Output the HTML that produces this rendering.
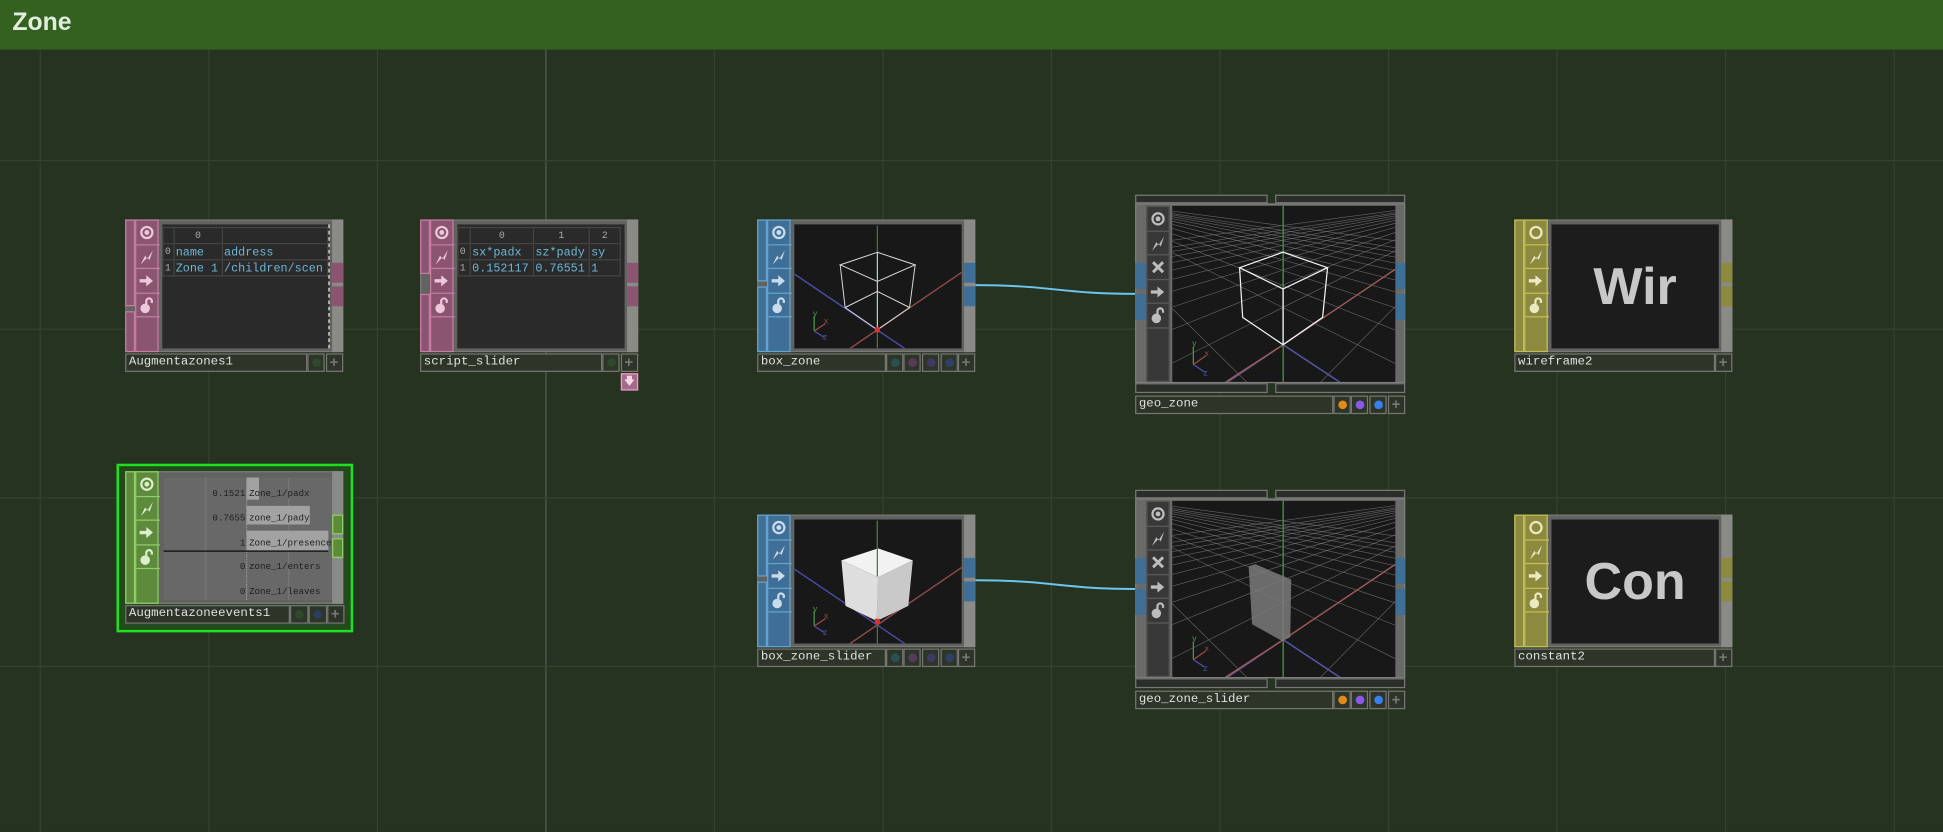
<!DOCTYPE html>
<html><head><meta charset="utf-8"><style>
html,body{margin:0;padding:0;background:#263320;overflow:hidden;width:1943px;height:832px}
#s{position:absolute;left:0;top:0;width:1568px;height:671px;transform-origin:0 0;transform:scale(1.2392,1.2399);background:#263320;font-family:"Liberation Mono",monospace;overflow:hidden}
.gv{position:absolute;top:40px;bottom:0;width:1px;background:#34422f}
.gh{position:absolute;left:0;right:0;height:1px;background:#34422f}
#hdr{position:absolute;left:0;top:0;width:1568px;height:40px;background:#356120}
#hdr span{position:absolute;left:10px;top:7px;font:bold 20px "Liberation Sans",sans-serif;color:#dfeedd}
.n{position:absolute}
.body{position:absolute;left:0;top:0;width:176px;height:107px;background:#626260;border:1px solid #7a7a78;box-sizing:border-box}
.ls{position:absolute;left:0;top:0;width:8px;height:107px}
.ic{position:absolute;left:8px;top:0;width:19px;height:107px;box-sizing:border-box}
.ic svg{display:block}
.cell{width:19px;height:19.5px;box-sizing:border-box}
.vw{position:absolute;left:30px;top:4px;width:135px;height:100px;background:#181818;overflow:hidden}
.rs{position:absolute;left:167px;top:0;width:9px;height:107px;background:#8a8a86}
.out{position:absolute;left:167px;width:9px;height:16px}
.nb{position:absolute;top:108px;height:15px;box-sizing:border-box;border:1px solid #767674;background:#2d3428;color:#e0e0e0;font-size:10px;line-height:13px;padding-left:2px;white-space:nowrap;overflow:hidden}
.bx{position:absolute;top:108px;height:15px;width:14px;box-sizing:border-box;border:1px solid #767674;background:#2d3428}
.dot{position:absolute;left:3px;top:3px;width:7px;height:7px;border-radius:50%}
.pl{position:absolute;left:2px;top:0;color:#777;font:bold 12px "Liberation Sans",sans-serif;line-height:13px}
table{border-collapse:collapse;font-size:9.5px;color:#6db7d8;position:absolute;left:0;top:2px}
td{border:1px solid #444;height:12px;padding:0 1px;white-space:nowrap;overflow:hidden}
td.i{color:#aaa;font-size:8px;width:7px}
tr.h td{color:#aaa;font-size:8px;text-align:center}
</style></head><body><div id="s">
<svg width="0" height="0" style="position:absolute">
<defs>
<symbol id="tg" viewBox="0 0 19 19"><circle cx="9.5" cy="9.5" r="5" fill="none" stroke="currentColor" stroke-width="2"/><circle cx="9.5" cy="9.5" r="2.2" fill="currentColor"/></symbol>
<symbol id="rg" viewBox="0 0 19 19"><circle cx="9.5" cy="9.5" r="5" fill="none" stroke="currentColor" stroke-width="2"/></symbol>
<symbol id="lt" viewBox="0 0 19 19"><path d="M4 16 L8 8 L10 11 L15 3 L12 12 L10 9.5 Z" fill="currentColor"/></symbol>
<symbol id="ar" viewBox="0 0 19 19"><path d="M3 8 H9 V4.5 L15 9.5 L9 14.5 V11 H3 Z" fill="currentColor"/></symbol>
<symbol id="lk" viewBox="0 0 19 19"><circle cx="8" cy="12" r="4.3" fill="currentColor"/><path d="M9 8 V5.5 A2.5 2.5 0 0 1 14 5.5 V7" fill="none" stroke="currentColor" stroke-width="2"/></symbol>
<symbol id="xx" viewBox="0 0 19 19"><path d="M5 5 L14 14 M14 5 L5 14" stroke="currentColor" stroke-width="2.6"/></symbol>
<g id="grid" fill="none">
<g stroke="#7a7a7a" stroke-width="0.5" stroke-opacity="0.8">
<line x1="268" y1="-8" x2="-83" y2="712"/><line x1="268" y1="-8" x2="-300.8" y2="568"/><line x1="268" y1="-8" x2="-549.6" y2="403.6"/><line x1="268" y1="-8" x2="-627.6" y2="352"/><line x1="268" y1="-8" x2="-688" y2="312"/><line x1="268" y1="-8" x2="-736.4" y2="280"/><line x1="268" y1="-8" x2="-776" y2="254"/><line x1="268" y1="-8" x2="-809" y2="232"/><line x1="268" y1="-8" x2="-836.8" y2="213.6"/><line x1="268" y1="-8" x2="-860.8" y2="198"/><line x1="268" y1="-8" x2="-881.6" y2="184"/><line x1="268" y1="-8" x2="-900" y2="172"/><line x1="268" y1="-8" x2="-930" y2="152"/><line x1="268" y1="-8" x2="280" y2="952"/>
<line x1="-92" y1="-8" x2="277" y2="712"/><line x1="-92" y1="-8" x2="491.2" y2="568"/><line x1="-92" y1="-8" x2="736" y2="403.6"/><line x1="-92" y1="-8" x2="812.4" y2="352"/><line x1="-92" y1="-8" x2="872" y2="312"/><line x1="-92" y1="-8" x2="919.6" y2="280"/><line x1="-92" y1="-8" x2="958.4" y2="254"/><line x1="-92" y1="-8" x2="991" y2="232"/><line x1="-92" y1="-8" x2="1018.4" y2="213.6"/><line x1="-92" y1="-8" x2="1041.6" y2="198"/><line x1="-92" y1="-8" x2="1062.4" y2="184"/><line x1="-92" y1="-8" x2="1080" y2="172"/><line x1="-92" y1="-8" x2="1110" y2="152"/><line x1="-92" y1="-8" x2="-80" y2="952"/>
</g>
<line x1="89.5" y1="112" x2="-446" y2="472" stroke="#5656a8" stroke-width="1.2"/>
<line x1="89.5" y1="112" x2="268" y2="-8" stroke="#9a5a58" stroke-width="1.2"/>
<line x1="89.5" y1="112" x2="634" y2="472" stroke="#5656a8" stroke-width="1.2"/>
<line x1="89.5" y1="112" x2="-200" y2="300" stroke="#9a5a58" stroke-width="1.2"/>
<line x1="89.5" y1="0" x2="89.5" y2="142" stroke="#3f8a3f" stroke-width="1.2"/>
</g>
<g id="ax2">
<line x1="0" y1="40" x2="89" y2="100" stroke="#4a4aa0" stroke-width="1.2"/>
<line x1="45" y1="100" x2="136" y2="38" stroke="#8a4a48" stroke-width="1.2"/>
<line x1="67" y1="1" x2="67" y2="100" stroke="#3f7a3f" stroke-width="1"/>
<g font-family="Liberation Sans,sans-serif" font-size="7"><line x1="16" y1="86" x2="16" y2="74" stroke="#4a9a4a"/><line x1="16" y1="86" x2="25" y2="80" stroke="#a04848"/><line x1="16" y1="86" x2="24" y2="91" stroke="#5050b0"/><text x="15" y="74" fill="#4a9a4a">y</text><text x="24" y="80" fill="#a04848">x</text><text x="23" y="93" fill="#5050b0">z</text></g>
</g>
</defs></svg>

<div class="gv" style="left:32px"></div><div class="gv" style="left:168px"></div><div class="gv" style="left:304px"></div><div class="gv" style="left:440px;background:#4a5e56"></div><div class="gv" style="left:576px"></div><div class="gv" style="left:712px"></div><div class="gv" style="left:848px"></div><div class="gv" style="left:984px"></div><div class="gv" style="left:1120px"></div><div class="gv" style="left:1256px"></div><div class="gv" style="left:1392px"></div><div class="gv" style="left:1528px"></div>
<div class="gh" style="top:129px"></div><div class="gh" style="top:265px"></div><div class="gh" style="top:401px"></div><div class="gh" style="top:537px"></div>
<div id="hdr"><span>Zone</span></div>

<svg style="position:absolute;left:0;top:0" width="1568" height="671"><path d="M787,230 C850,230 855,237 916,237" stroke="#6cc6ef" stroke-width="1.6" fill="none"/><path d="M787,468 C850,468 855,475 916,475" stroke="#6cc6ef" stroke-width="1.6" fill="none"/></svg>

<!-- Augmentazones1 -->
<div class="n" style="left:101px;top:177px">
<div class="body"></div>
<div class="ls" style="background:#8b5470;border:1px solid #c47ea2;box-sizing:border-box;height:70px"></div>
<div class="ls" style="top:74px;height:33px;background:#8b5470;border:1px solid #c47ea2;box-sizing:border-box"></div>
<div class="ic" style="background:#8b5470;border:1px solid #c47ea2;color:#ecc8da">
<div class="cell" style="border-bottom:1px solid #c47ea2"><svg width="17" height="19"><use href="#tg"/></svg></div><div class="cell" style="border-bottom:1px solid #c47ea2"><svg width="17" height="19"><use href="#lt"/></svg></div><div class="cell" style="border-bottom:1px solid #c47ea2"><svg width="17" height="19"><use href="#ar"/></svg></div><div class="cell" style="border-bottom:1px solid #c47ea2"><svg width="17" height="19"><use href="#lk"/></svg></div></div>
<div class="vw" style="background:#2a2a2a;border-right:1px dashed #eee;box-sizing:border-box;width:135px">
<table><tr class="h"><td class="i"></td><td style="width:38px">0</td><td style="width:85px"></td></tr><tr><td class="i">0</td><td>name</td><td>address</td></tr><tr><td class="i">1</td><td>Zone 1</td><td>/children/scen</td></tr></table></div>
<div class="rs"></div><div class="out" style="top:35px;background:#8b5470"></div><div class="out" style="top:54px;background:#8b5470"></div>
<div class="nb" style="left:0;width:147px">Augmentazones1</div>
<div class="bx" style="left:147px"><div class="dot" style="background:#2f4a2a"></div></div>
<div class="bx" style="left:162px"><span class="pl">+</span></div>
</div>

<!-- script_slider -->
<div class="n" style="left:339px;top:177px">
<div class="body"></div>
<div class="ls" style="background:#8b5470;border:1px solid #c47ea2;box-sizing:border-box;height:44px"></div>
<div class="ls" style="top:60px;height:47px;background:#8b5470;border:1px solid #c47ea2;box-sizing:border-box"></div>
<div class="ic" style="background:#8b5470;border:1px solid #c47ea2;color:#ecc8da">
<div class="cell" style="border-bottom:1px solid #c47ea2"><svg width="17" height="19"><use href="#tg"/></svg></div><div class="cell" style="border-bottom:1px solid #c47ea2"><svg width="17" height="19"><use href="#lt"/></svg></div><div class="cell" style="border-bottom:1px solid #c47ea2"><svg width="17" height="19"><use href="#ar"/></svg></div><div class="cell" style="border-bottom:1px solid #c47ea2"><svg width="17" height="19"><use href="#lk"/></svg></div></div>
<div class="vw" style="background:#2a2a2a">
<table><tr class="h"><td class="i"></td><td style="width:48px">0</td><td style="width:42px">1</td><td style="width:22px">2</td></tr><tr><td class="i">0</td><td>sx*padx</td><td>sz*pady</td><td>sy</td></tr><tr><td class="i">1</td><td>0.152117</td><td>0.76551</td><td>1</td></tr></table></div>
<div class="rs"></div><div class="out" style="top:35px;background:#8b5470"></div><div class="out" style="top:54px;background:#8b5470"></div>
<div class="nb" style="left:0;width:147px">script_slider</div>
<div class="bx" style="left:147px"><div class="dot" style="background:#2f4a2a"></div></div>
<div class="bx" style="left:162px"><span class="pl">+</span></div>
<div style="position:absolute;left:162px;top:124px;width:14px;height:14px;box-sizing:border-box;background:#a46a8a;border:1px solid #f09ac8;color:#f0d8e4;font-size:9px;text-align:center;line-height:12px">&#129095;</div>
</div>

<!-- box_zone -->
<div class="n" style="left:611px;top:177px">
<div class="body"></div>
<div class="ls" style="background:#3f6e96;border:1px solid #66a4d0;box-sizing:border-box;height:50px"></div>
<div class="ls" style="top:54px;height:53px;background:#3f6e96;border:1px solid #66a4d0;box-sizing:border-box"></div>
<div class="ic" style="background:#3f6e96;border:1px solid #66a4d0;color:#c8dcee">
<div class="cell" style="border-bottom:1px solid #66a4d0"><svg width="17" height="19"><use href="#tg"/></svg></div><div class="cell" style="border-bottom:1px solid #66a4d0"><svg width="17" height="19"><use href="#lt"/></svg></div><div class="cell" style="border-bottom:1px solid #66a4d0"><svg width="17" height="19"><use href="#ar"/></svg></div><div class="cell" style="border-bottom:1px solid #66a4d0"><svg width="17" height="19"><use href="#lk"/></svg></div></div>
<div class="vw"><svg width="135" height="100"><use href="#ax2"/>
<g stroke="#d8d8d8" stroke-width="0.8" fill="none"><path d="M67 22.5 L37 32.6 L67 46 L97.5 32.6 Z M37 32.6 L41 67 L67 85 L93 67 L97.5 32.6 M67 46 V85 M41 67 L67 54 L93 67 M67 54 V22.5"/></g><rect x="65" y="83" width="4" height="4" fill="#e03030"/></svg></div>
<div class="rs"></div><div class="out" style="top:35px;background:#3f6e96"></div><div class="out" style="top:54px;background:#3f6e96"></div>
<div class="nb" style="left:0;width:104px">box_zone</div>
<div class="bx" style="left:104px"><div class="dot" style="background:#2b5050"></div></div>
<div class="bx" style="left:118px"><div class="dot" style="background:#5a3a5c"></div></div>
<div class="bx" style="left:133px"><div class="dot" style="background:#3e3a64"></div></div>
<div class="bx" style="left:148px"><div class="dot" style="background:#2e4066"></div></div>
<div class="bx" style="left:162px"><span class="pl">+</span></div>
</div>

<!-- box_zone_slider -->
<div class="n" style="left:611px;top:415px">
<div class="body"></div>
<div class="ls" style="background:#3f6e96;border:1px solid #66a4d0;box-sizing:border-box;height:50px"></div>
<div class="ls" style="top:54px;height:53px;background:#3f6e96;border:1px solid #66a4d0;box-sizing:border-box"></div>
<div class="ic" style="background:#3f6e96;border:1px solid #66a4d0;color:#c8dcee">
<div class="cell" style="border-bottom:1px solid #66a4d0"><svg width="17" height="19"><use href="#tg"/></svg></div><div class="cell" style="border-bottom:1px solid #66a4d0"><svg width="17" height="19"><use href="#lt"/></svg></div><div class="cell" style="border-bottom:1px solid #66a4d0"><svg width="17" height="19"><use href="#ar"/></svg></div><div class="cell" style="border-bottom:1px solid #66a4d0"><svg width="17" height="19"><use href="#lk"/></svg></div></div>
<div class="vw"><svg width="135" height="100"><use href="#ax2"/>
<polygon points="67.6,23.3 95.6,33 67.6,46.6 38,33" fill="#f2f2f2"/><polygon points="38,33 67.6,46.6 66.5,81.8 41.3,69.6" fill="#dedede"/><polygon points="67.6,46.6 95.6,33 92,69.6 66.5,81.8" fill="#c9c9c9"/><line x1="67" y1="1" x2="67" y2="46" stroke="#3f7a3f"/><rect x="65" y="80" width="4" height="4" fill="#e03030"/></svg></div>
<div class="rs"></div><div class="out" style="top:35px;background:#3f6e96"></div><div class="out" style="top:54px;background:#3f6e96"></div>
<div class="nb" style="left:0;width:104px">box_zone_slider</div>
<div class="bx" style="left:104px"><div class="dot" style="background:#2b5050"></div></div>
<div class="bx" style="left:118px"><div class="dot" style="background:#5a3a5c"></div></div>
<div class="bx" style="left:133px"><div class="dot" style="background:#3e3a64"></div></div>
<div class="bx" style="left:148px"><div class="dot" style="background:#2e4066"></div></div>
<div class="bx" style="left:162px"><span class="pl">+</span></div>
</div>

<!-- geo_zone -->
<div class="n" style="left:916px;top:157px;width:218px">
<div style="position:absolute;left:0;top:0;width:107px;height:7px;background:#2a2e28;border:1px solid #777;box-sizing:border-box"></div>
<div style="position:absolute;left:113px;top:0;width:105px;height:7px;background:#2a2e28;border:1px solid #777;box-sizing:border-box"></div>
<div style="position:absolute;left:0;top:7px;width:218px;height:145px;background:#6a6a68;border:1px solid #7e7e7c;box-sizing:border-box"></div>
<div style="position:absolute;left:0;top:55px;width:9px;height:21px;background:#3f6e96"></div><div style="position:absolute;left:0;top:80px;width:9px;height:21px;background:#3f6e96"></div>
<div style="position:absolute;left:210px;top:55px;width:8px;height:21px;background:#3f6e96"></div><div style="position:absolute;left:210px;top:80px;width:8px;height:21px;background:#3f6e96"></div>
<div class="ic" style="left:9px;top:9px;height:142px;background:#383838;border:1px solid #555;color:#bdbdbd">
<div class="cell" style="border-bottom:1px solid #5a5a5a"><svg width="17" height="19"><use href="#tg"/></svg></div><div class="cell" style="border-bottom:1px solid #5a5a5a"><svg width="17" height="19"><use href="#lt"/></svg></div><div class="cell" style="border-bottom:1px solid #5a5a5a"><svg width="17" height="19"><use href="#xx"/></svg></div><div class="cell" style="border-bottom:1px solid #5a5a5a"><svg width="17" height="19"><use href="#ar"/></svg></div><div class="cell" style="border-bottom:1px solid #5a5a5a"><svg width="17" height="19"><use href="#lk"/></svg></div></div>
<div class="vw" style="left:30px;top:9px;width:180px;height:142px"><svg width="180" height="142"><use href="#grid"/>
<g stroke="#f2f2f2" stroke-width="1" fill="none"><path d="M89.4 37.4 L54.3 49.9 L89.4 67 L125.3 49.9 Z M54.3 49.9 L56.8 90 L89.4 112 L121.3 90 L125.3 49.9 M89.4 67 V112"/></g>
<g font-family="Liberation Sans,sans-serif" font-size="7"><line x1="17" y1="128" x2="17" y2="114" stroke="#4a9a4a"/><line x1="17" y1="128" x2="27" y2="121" stroke="#a04848"/><line x1="17" y1="128" x2="26" y2="134" stroke="#5050b0"/><text x="16" y="113" fill="#4a9a4a">y</text><text x="26" y="121" fill="#a04848">x</text><text x="25" y="137" fill="#5050b0">z</text></g></svg></div>
<div style="position:absolute;left:0;top:152px;width:107px;height:8px;background:#2a2e28;border:1px solid #777;box-sizing:border-box"></div>
<div style="position:absolute;left:113px;top:152px;width:105px;height:8px;background:#2a2e28;border:1px solid #777;box-sizing:border-box"></div>
<div class="nb" style="left:0;top:162px;width:160px">geo_zone</div>
<div class="bx" style="left:160px;top:162px"><div class="dot" style="background:#e08a1a"></div></div>
<div class="bx" style="left:174px;top:162px"><div class="dot" style="background:#8a5ae6"></div></div>
<div class="bx" style="left:189px;top:162px"><div class="dot" style="background:#3a80ec"></div></div>
<div class="bx" style="left:204px;top:162px"><span class="pl">+</span></div>
</div>

<!-- geo_zone_slider -->
<div class="n" style="left:916px;top:395px;width:218px">
<div style="position:absolute;left:0;top:0;width:107px;height:7px;background:#2a2e28;border:1px solid #777;box-sizing:border-box"></div>
<div style="position:absolute;left:113px;top:0;width:105px;height:7px;background:#2a2e28;border:1px solid #777;box-sizing:border-box"></div>
<div style="position:absolute;left:0;top:7px;width:218px;height:145px;background:#6a6a68;border:1px solid #7e7e7c;box-sizing:border-box"></div>
<div style="position:absolute;left:0;top:55px;width:9px;height:21px;background:#3f6e96"></div><div style="position:absolute;left:0;top:80px;width:9px;height:21px;background:#3f6e96"></div>
<div style="position:absolute;left:210px;top:55px;width:8px;height:21px;background:#3f6e96"></div><div style="position:absolute;left:210px;top:80px;width:8px;height:21px;background:#3f6e96"></div>
<div class="ic" style="left:9px;top:9px;height:142px;background:#383838;border:1px solid #555;color:#bdbdbd">
<div class="cell" style="border-bottom:1px solid #5a5a5a"><svg width="17" height="19"><use href="#tg"/></svg></div><div class="cell" style="border-bottom:1px solid #5a5a5a"><svg width="17" height="19"><use href="#lt"/></svg></div><div class="cell" style="border-bottom:1px solid #5a5a5a"><svg width="17" height="19"><use href="#xx"/></svg></div><div class="cell" style="border-bottom:1px solid #5a5a5a"><svg width="17" height="19"><use href="#ar"/></svg></div><div class="cell" style="border-bottom:1px solid #5a5a5a"><svg width="17" height="19"><use href="#lk"/></svg></div></div>
<div class="vw" style="left:30px;top:9px;width:180px;height:142px"><svg width="180" height="142"><use href="#grid"/>
<polygon points="61.6,52.8 67,51 96,63.4 95.2,110 88.7,113 64.4,99.5" fill="#7a7a7a" fill-opacity="0.85"/>
<g font-family="Liberation Sans,sans-serif" font-size="7"><line x1="17" y1="128" x2="17" y2="114" stroke="#4a9a4a"/><line x1="17" y1="128" x2="27" y2="121" stroke="#a04848"/><line x1="17" y1="128" x2="26" y2="134" stroke="#5050b0"/><text x="16" y="113" fill="#4a9a4a">y</text><text x="26" y="121" fill="#a04848">x</text><text x="25" y="137" fill="#5050b0">z</text></g></svg></div>
<div style="position:absolute;left:0;top:152px;width:107px;height:8px;background:#2a2e28;border:1px solid #777;box-sizing:border-box"></div>
<div style="position:absolute;left:113px;top:152px;width:105px;height:8px;background:#2a2e28;border:1px solid #777;box-sizing:border-box"></div>
<div class="nb" style="left:0;top:162px;width:160px">geo_zone_slider</div>
<div class="bx" style="left:160px;top:162px"><div class="dot" style="background:#e08a1a"></div></div>
<div class="bx" style="left:174px;top:162px"><div class="dot" style="background:#8a5ae6"></div></div>
<div class="bx" style="left:189px;top:162px"><div class="dot" style="background:#3a80ec"></div></div>
<div class="bx" style="left:204px;top:162px"><span class="pl">+</span></div>
</div>

<!-- wireframe2 -->
<div class="n" style="left:1222px;top:177px">
<div class="body"></div>
<div class="ls" style="background:#8c8a3e;border:1px solid #c2c056;box-sizing:border-box"></div>
<div class="ic" style="background:#8c8a3e;border:1px solid #c2c056;color:#ece9c0">
<div class="cell" style="border-bottom:1px solid #c2c056"><svg width="17" height="19"><use href="#rg"/></svg></div><div class="cell" style="border-bottom:1px solid #c2c056"><svg width="17" height="19"><use href="#lt"/></svg></div><div class="cell" style="border-bottom:1px solid #c2c056"><svg width="17" height="19"><use href="#ar"/></svg></div><div class="cell" style="border-bottom:1px solid #c2c056"><svg width="17" height="19"><use href="#lk"/></svg></div></div>
<div class="vw" style="background:#1c1c1c;color:#c8c8c8;font:bold 42px 'Liberation Sans',sans-serif;text-align:center;line-height:100px">Wir</div>
<div class="rs"></div><div class="out" style="top:35px;background:#8c8a3e"></div><div class="out" style="top:54px;background:#8c8a3e"></div>
<div class="nb" style="left:0;width:162px">wireframe2</div>
<div class="bx" style="left:162px"><span class="pl">+</span></div>
</div>

<!-- constant2 -->
<div class="n" style="left:1222px;top:415px">
<div class="body"></div>
<div class="ls" style="background:#8c8a3e;border:1px solid #c2c056;box-sizing:border-box"></div>
<div class="ic" style="background:#8c8a3e;border:1px solid #c2c056;color:#ece9c0">
<div class="cell" style="border-bottom:1px solid #c2c056"><svg width="17" height="19"><use href="#rg"/></svg></div><div class="cell" style="border-bottom:1px solid #c2c056"><svg width="17" height="19"><use href="#lt"/></svg></div><div class="cell" style="border-bottom:1px solid #c2c056"><svg width="17" height="19"><use href="#ar"/></svg></div><div class="cell" style="border-bottom:1px solid #c2c056"><svg width="17" height="19"><use href="#lk"/></svg></div></div>
<div class="vw" style="background:#1c1c1c;color:#c8c8c8;font:bold 42px 'Liberation Sans',sans-serif;text-align:center;line-height:100px">Con</div>
<div class="rs"></div><div class="out" style="top:35px;background:#8c8a3e"></div><div class="out" style="top:54px;background:#8c8a3e"></div>
<div class="nb" style="left:0;width:162px">constant2</div>
<div class="bx" style="left:162px"><span class="pl">+</span></div>
</div>

<!-- Augmentazoneevents1 -->
<div style="position:absolute;left:94px;top:374px;width:191px;height:136px;box-sizing:border-box;border:2px solid #1ee21e;background:#224a1c"></div>
<div class="n" style="left:101px;top:380px">
<div class="body"></div>
<div class="ls" style="background:#5e8a3c;border:1px solid #8fcf6a;box-sizing:border-box"></div>
<div class="ic" style="background:#5e8a3c;border:1px solid #8fcf6a;color:#dcefcc">
<div class="cell" style="border-bottom:1px solid #8fcf6a"><svg width="17" height="19"><use href="#tg"/></svg></div><div class="cell" style="border-bottom:1px solid #8fcf6a"><svg width="17" height="19"><use href="#lt"/></svg></div><div class="cell" style="border-bottom:1px solid #8fcf6a"><svg width="17" height="19"><use href="#ar"/></svg></div><div class="cell" style="border-bottom:1px solid #8fcf6a"><svg width="17" height="19"><use href="#lk"/></svg></div></div>
<div class="vw" style="left:31px;top:5px;width:137px;height:99px;background:#686868">
<svg width="137" height="99" style="position:absolute;left:0;top:0">
<line x1="34" y1="0" x2="34" y2="99" stroke="#777"/><line x1="101" y1="0" x2="101" y2="99" stroke="#777"/>
<rect x="67" y="0" width="10" height="18" fill="#a2a2a2"/><rect x="67" y="23" width="51" height="15" fill="#a2a2a2"/><rect x="67" y="43" width="66" height="16" fill="#a2a2a2"/>
<line x1="67" y1="0" x2="67" y2="99" stroke="#999" stroke-dasharray="1,1"/>
<line x1="0" y1="59.5" x2="133" y2="59.5" stroke="#1a1a1a" stroke-width="1.2"/>
<g font-family="Liberation Mono,monospace" font-size="7.4" fill="#1e1e1e"><text x="66" y="15" text-anchor="end">0.1521</text><text x="66" y="35" text-anchor="end">0.7655</text><text x="66" y="55" text-anchor="end">1</text><text x="66" y="74" text-anchor="end">0</text><text x="66" y="94" text-anchor="end">0</text>
<text x="69" y="15">Zone_1/padx</text><text x="69" y="35">zone_1/pady</text><text x="69" y="55">Zone_1/presence</text><text x="69" y="74">zone_1/enters</text><text x="69" y="94">Zone_1/leaves</text></g></svg></div>
<div class="rs"></div><div class="out" style="top:35px;background:#5e8a3c;border:1px solid #8fcf6a;box-sizing:border-box"></div><div class="out" style="top:54px;background:#5e8a3c;border:1px solid #8fcf6a;box-sizing:border-box"></div>
<div class="nb" style="left:0;width:133px">Augmentazoneevents1</div>
<div class="bx" style="left:133px;width:15px"><div class="dot" style="background:#2f4a2a"></div></div>
<div class="bx" style="left:148px;width:15px"><div class="dot" style="background:#2a3f5e"></div></div>
<div class="bx" style="left:163px"><span class="pl">+</span></div>
</div>

</div></body></html>
